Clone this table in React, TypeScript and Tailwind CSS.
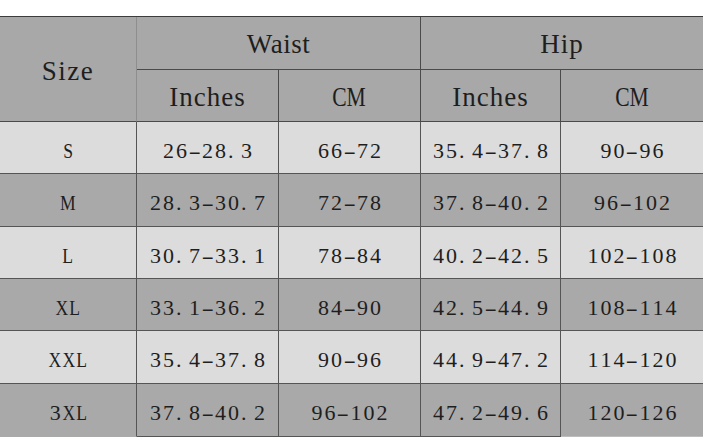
import React from "react";

const Mono = ({ t }: { t: string }) => (
  <span className="inline-flex">
    {t.split("").map((c, i) =>
      c === "-" ? (
        <span key={i} className="inline-block w-[13px] text-center">
          <span className="inline-block scale-x-[1.7]">-</span>
        </span>
      ) : c === "." ? (
        <span key={i} className="inline-block w-[13px] text-left pl-[1px]">
          .
        </span>
      ) : /[0-9]/.test(c) ? (
        <span key={i} className="inline-block w-[13px] text-center">
          {c}
        </span>
      ) : (
        <span key={i} className="inline-block scale-x-[0.8] -mx-[1px]">
          {c}
        </span>
      )
    )}
  </span>
);

const rows = [
  ["S", "26-28.3", "66-72", "35.4-37.8", "90-96"],
  ["M", "28.3-30.7", "72-78", "37.8-40.2", "96-102"],
  ["L", "30.7-33.1", "78-84", "40.2-42.5", "102-108"],
  ["XL", "33.1-36.2", "84-90", "42.5-44.9", "108-114"],
  ["XXL", "35.4-37.8", "90-96", "44.9-47.2", "114-120"],
  ["3XL", "37.8-40.2", "96-102", "47.2-49.6", "120-126"],
];

export default function App() {
  return (
    <div className="w-[708px] h-[445px] bg-white pt-[16px] text-[#1e1e1e] font-['Liberation_Serif','DejaVu_Serif',serif]">
      <div className="w-[703px] grid grid-cols-[137px_142px_142px_140px_142px] grid-rows-[53px_52px_52px_53px_52px_52px_53px_53px] border-t border-[#3c3c3c]">
        <div className="row-span-2 bg-[#a8a8a8] border-r border-[#8e8e8e] border-b border-b-[#4a4a4a] flex items-center justify-center text-[27px] tracking-[1.5px] pt-[4px]">
          Size
        </div>
        <div className="col-span-2 bg-[#a8a8a8] border-r border-b border-[#4a4a4a] flex items-center justify-center text-[27px] tracking-[0.5px] pt-[3px]">
          Waist
        </div>
        <div className="col-span-2 bg-[#a8a8a8] border-b border-[#4a4a4a] flex items-center justify-center text-[27px] tracking-[1px] pt-[3px]">
          Hip
        </div>
        <div className="bg-[#a8a8a8] border-r border-b border-[#4a4a4a] flex items-center justify-center text-[27px] tracking-[1px] pt-[3px]">
          Inches
        </div>
        <div className="bg-[#a8a8a8] border-r border-b border-[#4a4a4a] flex items-center justify-center text-[27px] pt-[3px]">
          <span className="inline-block scale-x-[0.8]">CM</span>
        </div>
        <div className="bg-[#a8a8a8] border-r border-b border-[#4a4a4a] flex items-center justify-center text-[27px] tracking-[1px] pt-[3px]">
          Inches
        </div>
        <div className="bg-[#a8a8a8] border-b border-[#4a4a4a] flex items-center justify-center text-[27px] pt-[3px]">
          <span className="inline-block scale-x-[0.8]">CM</span>
        </div>
        {rows.map((r, ri) => {
          const bg = ri % 2 === 0 ? "bg-[#dcdcdc]" : "bg-[#a9a9a9]";
          const last = ri === rows.length - 1;
          return r.map((cell, ci) => (
            <div
              key={ri + "-" + ci}
              className={
                bg +
                " flex items-center justify-center text-[22px] pt-[5px] " +
                (ci < 4 ? "border-r border-r-[#555555] " : "") +
                (last ? (ci === 0 ? "border-b border-b-transparent" : ci === 4 ? "border-b border-b-[#bdbdbd]" : "border-b border-b-[#555555]") : "border-b border-b-[#555555]")
              }
            >
              <Mono t={cell} />
            </div>
          ));
        })}
      </div>
    </div>
  );
}
